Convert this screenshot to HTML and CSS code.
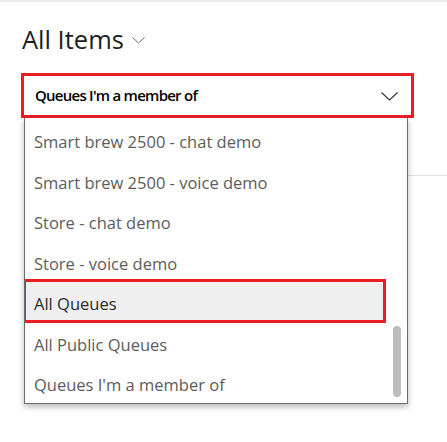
FILE: index.html
```html
<!DOCTYPE html>
<html lang="en">
<head>
<meta charset="utf-8">
<title>All Items</title>
<link rel="stylesheet" href="styles.css">
</head>
<body>
<div class="page">
  <div class="view-title">
    <span class="view-name">All Items</span>
    <svg class="title-chevron" width="13" height="7" viewBox="0 0 13 7"><path d="M0.5 0.5 L6.5 6 L12.5 0.5" fill="none" stroke="#707070" stroke-width="1"/></svg>
  </div>
  <div class="combo-wrap">
    <div class="combo">
      <span class="combo-text">Queues I'm a member of</span>
      <svg class="combo-chevron" width="17" height="9" viewBox="0 0 17 9"><path d="M0.5 0.5 L8.5 8 L16.5 0.5" fill="none" stroke="#333" stroke-width="1.1"/></svg>
    </div>
    <div class="divider"></div>
    <div class="dropdown">
      <div class="option">Smart brew 2500 - chat demo</div>
      <div class="option">Smart brew 2500 - voice demo</div>
      <div class="option">Store - chat demo</div>
      <div class="option">Store - voice demo</div>
      <div class="option option-hover">All Queues</div>
      <div class="option">All Public Queues</div>
      <div class="option">Queues I'm a member of</div>
      <div class="scroll-thumb"></div>
    </div>
  </div>
</div>
</body>
</html>
```
FILE: styles.css
```css
html, body {
  margin: 0;
  padding: 0;
  background: #ffffff;
}
body {
  font-family: "Open Sans", "Noto Sans", sans-serif;
  width: 447px;
  height: 442px;
  overflow: hidden;
}
.page {
  border-top: 2px solid #ececec;
  padding-top: 21px;
  padding-left: 21px;
}
.view-title {
  display: flex;
  align-items: center;
  gap: 8px;
  height: 32px;
  padding-left: 1px;
}
.view-name {
  font-size: 25.5px;
  line-height: 32px;
  color: #201f1e;
}
.title-chevron {
  margin-top: 3px;
}
.combo-wrap {
  position: relative;
  margin-top: 18px;
}
.combo {
  box-sizing: border-box;
  width: 393px;
  height: 45px;
  border: 3px solid #ec1c24;
  background: #fff;
  display: flex;
  align-items: center;
  justify-content: space-between;
  padding: 0 13px 0 11px;
}
.combo-text {
  font-size: 15px;
  font-weight: 600;
  letter-spacing: -0.75px;
  color: #000;
  line-height: 39px;
}
.combo-chevron {
  margin-top: 1px;
}
.divider {
  margin-top: 57px;
  margin-left: 387px;
  height: 1px;
  background: #e1e1e1;
}
.dropdown {
  position: absolute;
  top: 45px;
  left: 3px;
  box-sizing: border-box;
  width: 384px;
  height: 286px;
  border: 1px solid #6b6b6b;
  border-top: none;
  background: #fff;
  box-shadow: 0 3px 6px rgba(0, 0, 0, 0.28);
  padding-top: 4px;
  overflow: hidden;
}
.option {
  position: relative;
  z-index: 0;
  height: 40.5px;
  line-height: 40.5px;
  padding-left: 9px;
  font-size: 16.5px;
  color: #5c5c5c;
  white-space: nowrap;
}
.option-hover {
  color: #2b2b2b;
}
.option-hover::before {
  content: "";
  position: absolute;
  z-index: -1;
  top: -5px;
  left: -2px;
  width: 363px;
  height: 44px;
  box-sizing: border-box;
  border: 3px solid #ec1c24;
  background: #efefef;
}
.scroll-thumb {
  position: absolute;
  top: 208px;
  left: 368px;
  width: 8px;
  height: 71px;
  border-radius: 4px;
  background: #bdbdbd;
}
```
